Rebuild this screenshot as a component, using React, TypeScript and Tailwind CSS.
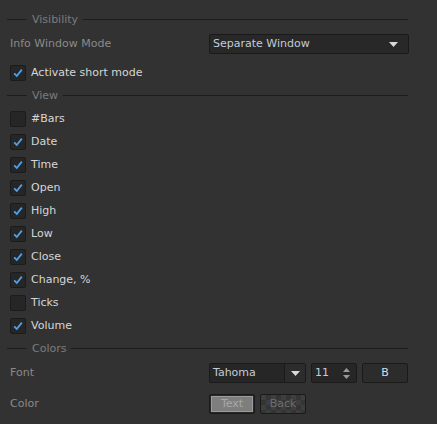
const font = { fontFamily: 'Tahoma, "DejaVu Sans", sans-serif' }

function Header({ title }: { title: string }) {
  return (
    <div className="flex items-center h-[23px] pl-[7px] pr-[29px]">
      <div className="w-[20px] h-px bg-[#1c1c1c]" />
      <span className="px-[5px] pt-px text-[#7c7c7c]">{title}</span>
      <div className="flex-1 h-px bg-[#1c1c1c]" />
    </div>
  )
}

function Check({ on }: { on: boolean }) {
  return (
    <div className="w-[16px] h-[16px] rounded-[2px] bg-[#262626] border border-[#1b1b1b] flex items-center justify-center">
      {on && (
        <svg width="12" height="12" viewBox="0 0 12 12">
          <path d="M2.2 6.3 L4.8 9 L9.8 2.6" fill="none" stroke="#4da3ee" strokeWidth="1.8" />
        </svg>
      )}
    </div>
  )
}

function CheckRow({ label, on }: { label: string; on: boolean }) {
  return (
    <div className="flex items-center h-[23px] pl-[10px] gap-[5px]">
      <Check on={on} />
      <span className="pt-px text-[#d6d6d6]">{label}</span>
    </div>
  )
}

function Arrow() {
  return (
    <svg width="9" height="5" viewBox="0 0 9 5">
      <path d="M0 0 H9 L4.5 5 Z" fill="#d8d8d8" />
    </svg>
  )
}

const rows: [string, boolean][] = [
  ['#Bars', false],
  ['Date', true],
  ['Time', true],
  ['Open', true],
  ['High', true],
  ['Low', true],
  ['Close', true],
  ['Change, %', true],
  ['Ticks', false],
  ['Volume', true],
]

export default function App() {
  return (
    <div className="w-[437px] h-[424px] bg-[#323232] text-[11px] pt-[8px] overflow-hidden" style={font}>
      <Header title="Visibility" />
      <div className="flex items-center h-[20px] mt-[3px]">
        <span className="w-[209px] pl-[10px] pt-px text-[#8a8a8a]">Info Window Mode</span>
        <div className="w-[200px] h-[20px] bg-[#282828] border border-[#1a1a1a] rounded-[2px] flex items-center justify-between pl-[3px] pr-[10px]">
          <span className="pt-px text-[#c4ccd6]">Separate Window</span>
          <Arrow />
        </div>
      </div>
      <div className="mt-[7px]">
        <CheckRow label="Activate short mode" on />
      </div>
      <Header title="View" />
      {rows.map(([l, on]) => (
        <CheckRow key={l} label={l} on={on} />
      ))}
      <Header title="Colors" />
      <div className="flex items-center h-[20px] mt-[3px]">
        <span className="w-[209px] pl-[10px] pt-px text-[#8a8a8a]">Font</span>
        <div className="w-[97px] h-[20px] bg-[#262626] border border-[#1a1a1a] rounded-[2px] flex items-center">
          <span className="flex-1 pl-[3px] pt-px text-[#c4ccd6]">Tahoma</span>
          <div className="w-[21px] h-full border-l border-[#1a1a1a] bg-[#2c2c2c] flex items-center justify-center">
            <Arrow />
          </div>
        </div>
        <div className="ml-[5px] w-[46px] h-[20px] bg-[#262626] border border-[#1a1a1a] rounded-[2px] flex items-center justify-between pl-[3px] pr-[6px]">
          <span className="pt-px text-[#c4ccd6]">11</span>
          <div className="flex flex-col items-center gap-[3px]">
            <svg width="7" height="4" viewBox="0 0 7 4"><path d="M0 4 L3.5 0 L7 4 Z" fill="#9a9a9a" /></svg>
            <svg width="7" height="4" viewBox="0 0 7 4"><path d="M0 0 L3.5 4 L7 0 Z" fill="#9a9a9a" /></svg>
          </div>
        </div>
        <div className="ml-[5px] w-[46px] h-[20px] pt-px bg-[#2c2c2c] border border-[#1a1a1a] rounded-[2px] flex items-center justify-center text-[#d6dce4]">
          B
        </div>
      </div>
      <div className="flex items-center h-[20px] mt-[11px]">
        <span className="w-[209px] pl-[10px] pt-px text-[#8a8a8a]">Color</span>
        <div className="w-[46px] h-[20px] border border-[#1a1a1a] rounded-[2px] p-px bg-[#2a2a2a]">
          <div className="w-full h-full bg-[#7e7e7e] border border-[#9a9a9a] flex items-center justify-center text-[#a8a8a8]">Text</div>
        </div>
        <div className="ml-[5px] w-[46px] h-[20px] border border-[#1a1a1a] rounded-[2px] flex items-center justify-center text-[#6e6e6e] bg-[#3a3a3a] bg-[conic-gradient(#343434_25%,#3e3e3e_0_50%,#343434_0_75%,#3e3e3e_0)] bg-[length:10px_10px]">
          Back
        </div>
      </div>
    </div>
  )
}
